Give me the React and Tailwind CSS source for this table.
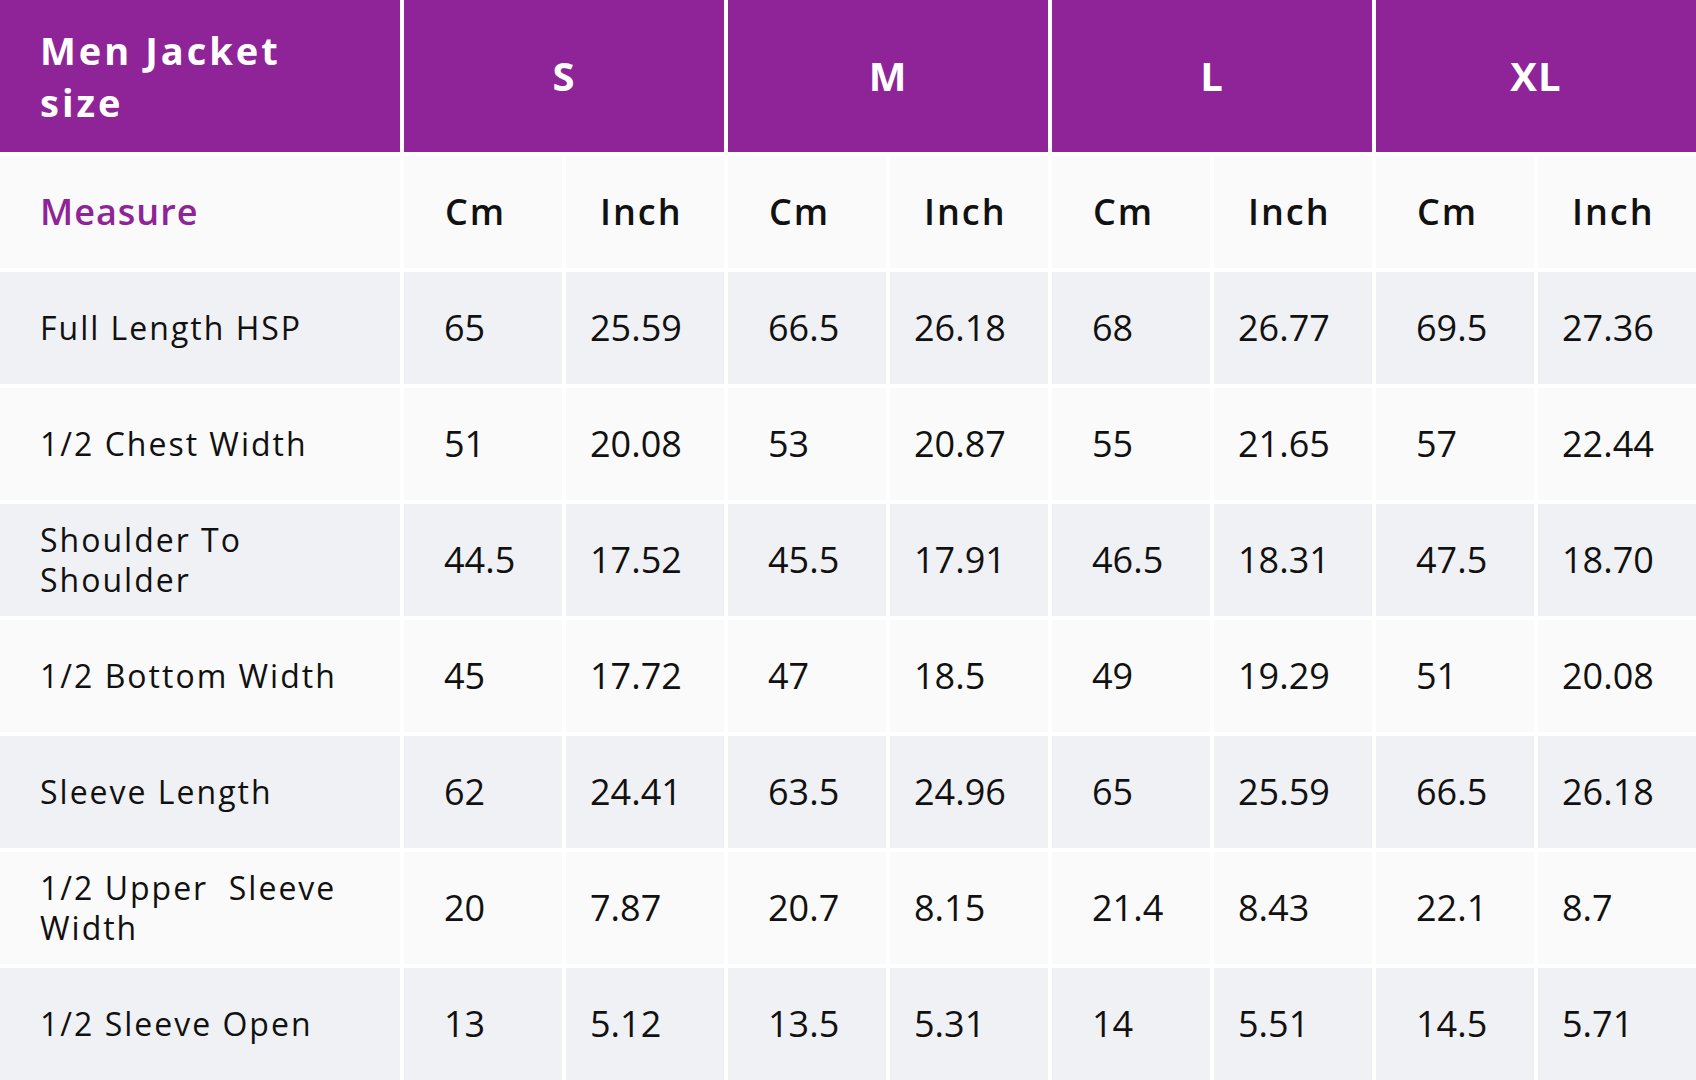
const sizes = ["S", "M", "L", "XL"]

const rows = [
  { label: "Full Length HSP", values: ["65", "25.59", "66.5", "26.18", "68", "26.77", "69.5", "27.36"] },
  { label: "1/2 Chest Width", values: ["51", "20.08", "53", "20.87", "55", "21.65", "57", "22.44"] },
  { label: ["Shoulder To", "Shoulder"], values: ["44.5", "17.52", "45.5", "17.91", "46.5", "18.31", "47.5", "18.70"] },
  { label: "1/2 Bottom Width", values: ["45", "17.72", "47", "18.5", "49", "19.29", "51", "20.08"] },
  { label: "Sleeve Length", values: ["62", "24.41", "63.5", "24.96", "65", "25.59", "66.5", "26.18"] },
  { label: ["1/2 Upper\u00a0 Sleeve", "Width"], values: ["20", "7.87", "20.7", "8.15", "21.4", "8.43", "22.1", "8.7"] },
  { label: "1/2 Sleeve Open", values: ["13", "5.12", "13.5", "5.31", "14", "5.51", "14.5", "5.71"] },
]

export default function App() {
  return (
    <div
      className="w-[1696px] h-[1080px] bg-white text-[#111] overflow-hidden"
      style={{ fontFamily: '"Open Sans", "Noto Sans", sans-serif' }}
    >
      <div className="grid grid-cols-[400px_repeat(8,158px)] gap-[4px]">
        {/* header */}
        <div className="h-[152px] bg-[#8e2497] flex flex-col justify-center pl-[40px] text-white font-bold text-[38px] leading-[52px] tracking-[3px]">
          <div className="h-[52px]">Men Jacket</div>
          <div className="h-[52px]">size</div>
        </div>
        {sizes.map((s) => (
          <div key={s} className="col-span-2 h-[152px] bg-[#8e2497] flex items-center justify-center text-white font-bold text-[40px] tracking-[1px]">
            {s}
          </div>
        ))}

        {/* units row */}
        <div className="h-[112px] bg-[#fafafa] flex items-center pl-[40px] text-[#8e2497] font-semibold text-[36px] tracking-[1px]">
          Measure
        </div>
        {sizes.map((s) => (
          <>
            <div key={s + "cm"} className="h-[112px] bg-[#fafafa] flex items-center pl-[41px] font-semibold text-[36px] tracking-[2px]">Cm</div>
            <div key={s + "in"} className="h-[112px] bg-[#fafafa] flex items-center pl-[34px] font-semibold text-[36px] tracking-[2px]">Inch</div>
          </>
        ))}

        {/* data rows */}
        {rows.map((r, i) => {
          const bg = i % 2 === 0 ? "bg-[#f0f1f5]" : "bg-[#fafafa]"
          const lines = Array.isArray(r.label) ? r.label : [r.label]
          return (
            <>
              <div className={`h-[112px] ${bg} flex flex-col justify-center pl-[40px] text-[32px] leading-[40px] tracking-[2px]`}>
                {lines.map((l) => (
                  <div key={l} className="h-[40px] whitespace-nowrap">{l}</div>
                ))}
              </div>
              {r.values.map((v, j) => (
                <div
                  key={j}
                  className={`h-[112px] ${bg} flex items-center text-[36px] ${j % 2 === 0 ? "pl-[40px]" : "pl-[24px]"}`}
                >
                  {v}
                </div>
              ))}
            </>
          )
        })}
      </div>
    </div>
  )
}
